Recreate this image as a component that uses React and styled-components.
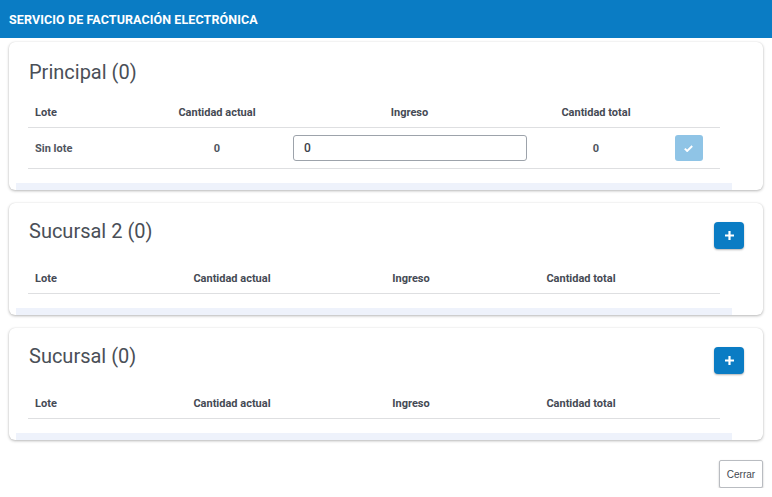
import React from 'react'
import styled, { createGlobalStyle } from 'styled-components'

const GlobalStyle = createGlobalStyle`
	html, body {
		margin: 0;
		padding: 0;
		background: #ffffff;
		font-family: 'Roboto', 'Liberation Sans', sans-serif;
	}
`

const Page = styled.div`
	display: flex;
	flex-direction: column;
	width: 772px;
`

const Header = styled.div`
	display: flex;
	align-items: center;
	height: 38px;
	padding: 0 9px;
	background-color: #0a7cc4;
	color: #ffffff;
	font-size: 12.5px;
	font-weight: 700;
	letter-spacing: 0.1px;
`

const Content = styled.div`
	display: flex;
	flex-direction: column;
	gap: 13px;
	padding: 4px 9px 0 9px;
`

const Card = styled.div`
	display: flex;
	flex-direction: column;
	background: #ffffff;
	border-radius: 6px;
	box-shadow: 0 1px 3px rgba(0, 0, 0, 0.28), 0 0 1px rgba(0, 0, 0, 0.12);
	padding-top: 19px;
	overflow: hidden;
`

const TitleRow = styled.div`
	display: flex;
	justify-content: space-between;
	align-items: flex-start;
	padding: 0 19px 0 20px;
	margin-bottom: 14px;
	min-height: 22px;
`

const Title = styled.h2`
	margin: ${p => (p.$raised ? '-2px 0 0 0' : '0')};
	font-size: 20px;
	line-height: 22px;
	font-weight: 400;
	color: #4a4f57;
`

const AddButton = styled.button`
	display: flex;
	align-items: center;
	justify-content: center;
	width: 30px;
	height: 27px;
	padding: 0;
	border: none;
	border-radius: 4px;
	background-color: #0a7cc4;
	box-shadow: 0 1px 2px rgba(0, 0, 0, 0.3);
	cursor: pointer;
`

const TableWrap = styled.div`
	margin: 0 31px 0 7px;
	padding: 0 12px 14px 12px;
`

const Row = styled.div`
	display: grid;
	grid-template-columns: ${p => p.$cols};
	align-items: center;
	height: ${p => (p.$head ? '30px' : '40px')};
	border-bottom: 1px solid #dedfe1;
	font-size: 11px;
	font-weight: 700;
	color: ${p => (p.$head ? '#454a54' : '#50555e')};
`

const Cell = styled.div`
	padding-left: ${p => (p.$left ? '7px' : '0')};
	display: flex;
	justify-content: ${p => (p.$left ? 'flex-start' : 'center')};
`

const Input = styled.input`
	box-sizing: border-box;
	width: 234px;
	height: 26px;
	margin-left: 1px;
	padding: 0 10px;
	border: 1px solid #9da3ab;
	border-radius: 3px;
	font-family: 'Roboto', 'Liberation Sans', sans-serif;
	font-size: 12px;
	font-weight: 500;
	color: #3d424a;
	outline: none;
`

const CheckButton = styled.button`
	display: flex;
	align-items: center;
	justify-content: center;
	width: 28px;
	height: 26px;
	padding: 0;
	border: none;
	border-radius: 3px;
	background-color: #8fc4e6;
`

const Strip = styled.div`
	height: 7px;
	margin: 0 31px 0 7px;
	background-color: #eef2fb;
`

const Footer = styled.div`
	display: flex;
	justify-content: flex-end;
	padding: 20px 9px 0 0;
`

const CloseButton = styled.button`
	width: 44px;
	height: 28px;
	padding: 0;
	background: #ffffff;
	border: 1px solid #b9bcc1;
	border-radius: 2px;
	box-shadow: 0 1px 2px rgba(0, 0, 0, 0.25);
	font-family: 'Liberation Sans', Arial, sans-serif;
	font-size: 10px;
	color: #444850;
`

const PlusIcon = () => (
	<svg width="9" height="9" viewBox="0 0 9 9">
		<path d="M3.4 0h2.2v3.4H9v2.2H5.6V9H3.4V5.6H0V3.4h3.4z" fill="#ffffff" />
	</svg>
)

const CheckIcon = () => (
	<svg width="9" height="7" viewBox="0 0 9 7">
		<path d="M0.8 3.6l2.4 2.4 5-5" stroke="#ffffff" strokeWidth="1.9" fill="none" />
	</svg>
)

const headers = ['Lote', 'Cantidad actual', 'Ingreso', 'Cantidad total']

const Section = ({ title, cols, withAdd, rows }) => (
	<Card>
		<TitleRow>
			<Title $raised={withAdd}>{title}</Title>
			{withAdd && (
				<AddButton>
					<PlusIcon />
				</AddButton>
			)}
		</TitleRow>
		<TableWrap>
			<Row $head $cols={cols}>
				{headers.map((h, i) => (
					<Cell key={h} $left={i === 0}>{h}</Cell>
				))}
				{!withAdd && <Cell />}
			</Row>
			{rows.map(r => (
				<Row key={r.lote} $cols={cols}>
					<Cell $left>{r.lote}</Cell>
					<Cell>{r.actual}</Cell>
					<Cell>
						<Input defaultValue={r.ingreso} />
					</Cell>
					<Cell>{r.total}</Cell>
					<Cell>
						<CheckButton>
							<CheckIcon />
						</CheckButton>
					</Cell>
				</Row>
			))}
		</TableWrap>
		<Strip />
	</Card>
)

export default function App() {
	return (
		<Page>
			<GlobalStyle />
			<Header>SERVICIO DE FACTURACIÓN ELECTRÓNICA</Header>
			<Content>
				<Section
					title="Principal (0)"
					cols="122px 134px 251px 122px 63px"
					rows={[{ lote: 'Sin lote', actual: 0, ingreso: '0', total: 0 }]}
				/>
				<Section title="Sucursal 2 (0)" cols="56px 296px 62px 278px" withAdd rows={[]} />
				<Section title="Sucursal (0)" cols="56px 296px 62px 278px" withAdd rows={[]} />
			</Content>
			<Footer>
				<CloseButton>Cerrar</CloseButton>
			</Footer>
		</Page>
	)
}
